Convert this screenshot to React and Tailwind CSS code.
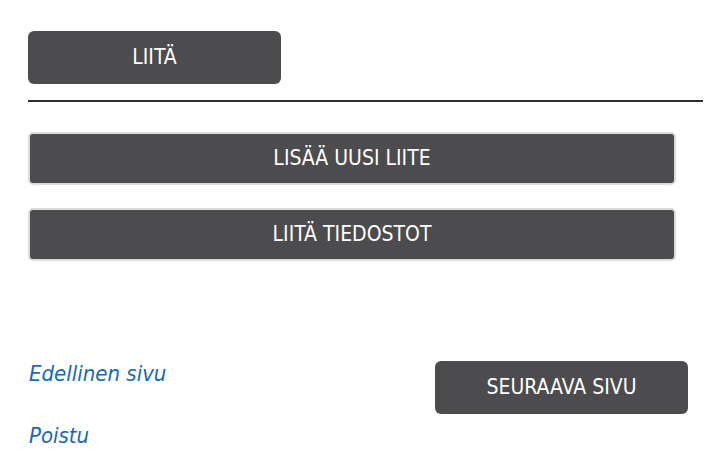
export default function App() {
  const cond = { fontFamily: '"DejaVu Sans Condensed", "DejaVu Sans", sans-serif' };
  return (
    <div className="w-[716px] h-[459px] bg-white relative overflow-hidden" style={cond}>
      <div className="pl-[28px] pr-[13px] pt-[31px]">
        <button className="w-[253px] h-[53px] rounded-[6px] bg-[#4c4b4d] text-white text-[21px] flex items-center justify-center">
          LIITÄ
        </button>
        <div className="mt-[16px] h-[2px] bg-[#2e2e2e]" />
        <div className="mt-[30px] w-[648px] flex flex-col gap-[23px]">
          <button className="h-[53px] rounded-[5px] bg-[#4c4b4d] border-2 border-[#dcdcdc] text-white text-[21px] flex items-center justify-center">
            LISÄÄ UUSI LIITE
          </button>
          <button className="h-[53px] rounded-[5px] bg-[#4c4b4d] border-2 border-[#dcdcdc] text-white text-[21px] flex items-center justify-center">
            LIITÄ TIEDOSTOT
          </button>
        </div>
        <div className="mt-[100px] flex w-[660px] justify-between">
          <div className="flex flex-col gap-[36px] pl-[1px]">
            <a className="text-[22px] italic text-[#1a68b2] leading-[26px]">Edellinen sivu</a>
            <a className="text-[22px] italic text-[#1a68b2] leading-[26px]">Poistu</a>
          </div>
          <button className="w-[253px] h-[53px] rounded-[6px] bg-[#4c4b4d] text-white text-[21px] flex items-center justify-center">
            SEURAAVA SIVU
          </button>
        </div>
      </div>
    </div>
  );
}
